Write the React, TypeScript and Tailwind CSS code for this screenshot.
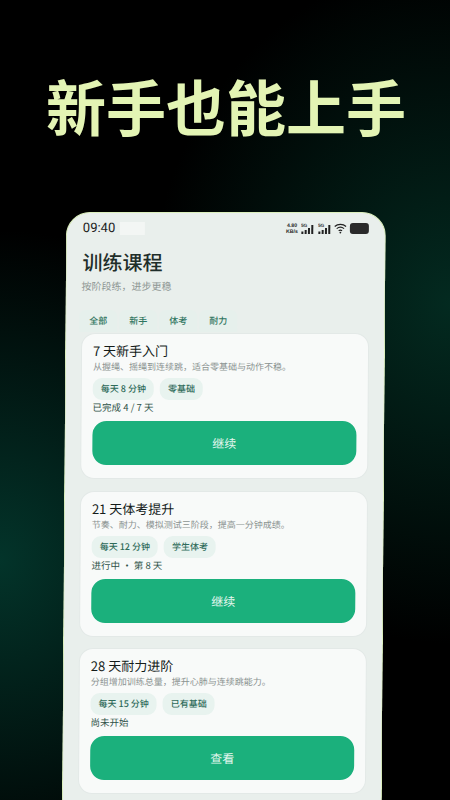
const cjk = "font-['Noto_Sans_CJK_SC','Noto_Sans',sans-serif]";

const courses = [
  {
    title: "7 天新手入门",
    desc: "从握绳、摇绳到连续跳，适合零基础与动作不稳。",
    chips: ["每天 8 分钟", "零基础"],
    status: "已完成 4 / 7 天",
    action: "继续",
  },
  {
    title: "21 天体考提升",
    desc: "节奏、耐力、模拟测试三阶段，提高一分钟成绩。",
    chips: ["每天 12 分钟", "学生体考"],
    status: "进行中 · 第 8 天",
    action: "继续",
  },
  {
    title: "28 天耐力进阶",
    desc: "分组增加训练总量，提升心肺与连续跳能力。",
    chips: ["每天 15 分钟", "已有基础"],
    status: "尚未开始",
    action: "查看",
  },
];

function StatusIcons() {
  return (
    <div className="flex items-center text-[#222]">
      <div className="flex flex-col items-center text-[5.2px] leading-[6px] font-bold font-['Liberation_Sans',sans-serif]">
        <span>4.80</span>
        <span>KB/s</span>
      </div>
      {[0, 1].map((i) => (
        <svg key={i} width="14" height="11" viewBox="0 0 14 11" className="ml-[3px]">
          <text x="0" y="4" fontSize="4.8" fontWeight="700" fontFamily="Liberation Sans" fill="#333">5G</text>
          <rect x="0.5" y="8.5" width="2" height="2.5" fill="#222" />
          <rect x="3.8" y="7" width="2" height="4" fill="#222" />
          <rect x="7.1" y="5" width="2" height="6" fill="#222" />
          <rect x="10.4" y="2" width="2" height="9" fill="#222" />
        </svg>
      ))}
      <svg width="13" height="11" viewBox="0 0 13 11" fill="none" stroke="#222" strokeWidth="1.2" className="ml-[2px]">
        <path d="M0.8 3.5C4 0.6 9 0.6 12.2 3.5" />
        <path d="M2.8 5.6C4.9 3.9 8.1 3.9 10.2 5.6" />
        <path d="M4.8 7.7C5.8 7 7.2 7 8.2 7.7" />
        <circle cx="6.5" cy="9.6" r="0.9" fill="#222" stroke="none" />
      </svg>
      <div className="w-[19px] h-[11px] rounded-[3px] bg-[#2a2a2a] ml-[3px]" />
    </div>
  );
}

function CourseCard({ course }: { course: (typeof courses)[number] }) {
  return (
    <div className="h-[146px] rounded-[14px] bg-[#f8faf9] border border-[#e3e9e7] px-[11px] pt-[8px] mb-[11.5px]">
      <div className="text-[13px] leading-[18px] text-[#141c1a]">{course.title}</div>
      <div className="text-[9px] leading-[14px] text-[#8b9391]">{course.desc}</div>
      <div className="flex gap-[6px] mt-[4px]">
        {course.chips.map((chip) => (
          <span
            key={chip}
            className="h-[22px] px-2 rounded-[9px] bg-[#e8f3ef] text-[9px] leading-[22px] font-medium text-[#2f6b5a]"
          >
            {chip}
          </span>
        ))}
      </div>
      <div className="text-[9.5px] leading-[14px] text-[#2f5248]">{course.status}</div>
      <div className="mt-[7px] h-[44px] rounded-[14px] bg-[#1bb07c] flex items-center justify-center text-[12px] text-[#e4f7ef]">
        {course.action}
      </div>
    </div>
  );
}

export default function App() {
  return (
    <div
      className={`${cjk} h-[800px] w-[450px] overflow-hidden bg-black bg-[radial-gradient(ellipse_300px_340px_at_100%_38%,#032a20_0%,#032a2000_100%),radial-gradient(ellipse_300px_330px_at_0%_70%,#03342a_0%,#03342a00_100%)]`}
    >
      <div className="h-[212px] pt-[63px] pl-[2px] text-center text-[60px] leading-[84px] font-bold text-[#e3f4b4] whitespace-nowrap">
        新手也能上手
      </div>
      <div className="ml-[66px] w-[320px] h-[600px] rounded-t-[24px] bg-[#e9efec] border-t border-x border-[#dcefbd] overflow-hidden origin-top -skew-x-[0.4deg]">
        <div className="flex items-center justify-between px-[16px] h-[30px]">
          <div className="flex items-center">
            <span className="text-[13px] text-[#222] font-['Roboto',sans-serif]">09:40</span>
            <div className="ml-[5px] w-[25px] h-[13px] bg-[#f3f6f4]" />
          </div>
          <StatusIcons />
        </div>
        <div className="ml-[16px] mt-[6px] text-[20px] leading-[26px] font-medium text-[#1f2e2a]">训练课程</div>
        <div className="ml-[15px] mt-[4px] text-[10px] leading-[14px] text-[#8f9794]">按阶段练，进步更稳</div>
        <div className="flex gap-[2px] ml-[13px] mt-[17px] h-[22px]">
          {["全部", "新手", "体考", "耐力"].map((tab) => (
            <span
              key={tab}
              className="w-[38px] rounded-t-[6px] bg-[#e6f0ec] text-center text-[9px] leading-[22px] font-medium text-[#2f7560]"
            >
              {tab}
            </span>
          ))}
        </div>
        <div className="ml-[15px] mr-[15px] mt-[1px]">
          {courses.map((course) => (
            <CourseCard key={course.title} course={course} />
          ))}
        </div>
      </div>
    </div>
  );
}
